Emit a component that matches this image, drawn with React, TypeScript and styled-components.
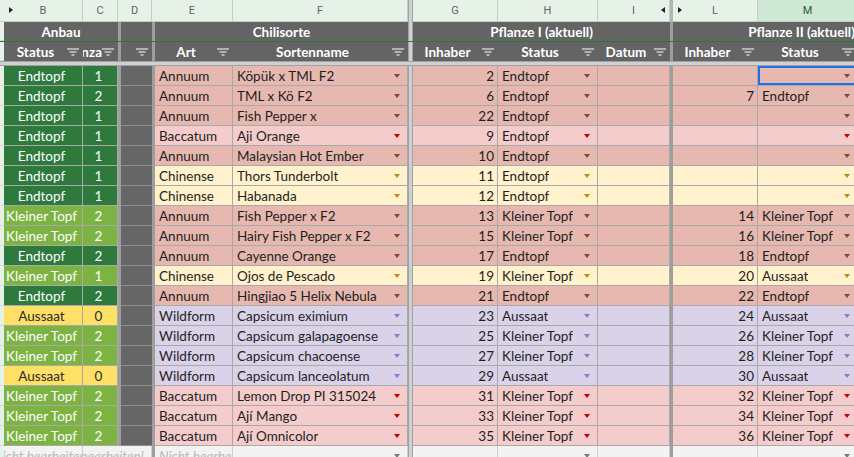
import styled, { createGlobalStyle } from 'styled-components';

// A | B | C | sep | D | sep | E | F | frozen | G | H | I | sep | L | M | N
const COLS =
	'4px 79px 35px 3px 31px 3px 78px 175px 5px 85px 100px 72px 3px 85px 100px 72px';

type Status = 'Endtopf' | 'Kleiner Topf' | 'Aussaat';
type Species = 'Annuum' | 'Baccatum' | 'Chinense' | 'Wildform';

interface Plant {
	status: Status;
	count: number;
	art: Species;
	name: string;
	owner1: number;
	status1: Status;
	owner2?: number;
	status2?: Status;
}

const speciesColors: Record<Species, { bg: string; arrow: string }> = {
	Annuum: { bg: '#e6b8af', arrow: '#8a4338' },
	Baccatum: { bg: '#f4cccc', arrow: '#cc0000' },
	Chinense: { bg: '#fff2cc', arrow: '#b8900c' },
	Wildform: { bg: '#d9d2e9', arrow: '#8e7cc3' },
};

const statusColors: Record<Status, { bg: string; color: string }> = {
	Endtopf: { bg: '#2e7a3d', color: '#ffffff' },
	'Kleiner Topf': { bg: '#7cb342', color: '#ffffff' },
	Aussaat: { bg: '#ffe066', color: '#2b2b2b' },
};

const plants: Plant[] = [
	{ status: 'Endtopf', count: 1, art: 'Annuum', name: 'Köpük x TML F2', owner1: 2, status1: 'Endtopf' },
	{ status: 'Endtopf', count: 2, art: 'Annuum', name: 'TML x Kö F2', owner1: 6, status1: 'Endtopf', owner2: 7, status2: 'Endtopf' },
	{ status: 'Endtopf', count: 1, art: 'Annuum', name: 'Fish Pepper x', owner1: 22, status1: 'Endtopf' },
	{ status: 'Endtopf', count: 1, art: 'Baccatum', name: 'Aji Orange', owner1: 9, status1: 'Endtopf' },
	{ status: 'Endtopf', count: 1, art: 'Annuum', name: 'Malaysian Hot Ember', owner1: 10, status1: 'Endtopf' },
	{ status: 'Endtopf', count: 1, art: 'Chinense', name: 'Thors Tunderbolt', owner1: 11, status1: 'Endtopf' },
	{ status: 'Endtopf', count: 1, art: 'Chinense', name: 'Habanada', owner1: 12, status1: 'Endtopf' },
	{ status: 'Kleiner Topf', count: 2, art: 'Annuum', name: 'Fish Pepper x F2', owner1: 13, status1: 'Kleiner Topf', owner2: 14, status2: 'Kleiner Topf' },
	{ status: 'Kleiner Topf', count: 2, art: 'Annuum', name: 'Hairy Fish Pepper x F2', owner1: 15, status1: 'Kleiner Topf', owner2: 16, status2: 'Kleiner Topf' },
	{ status: 'Endtopf', count: 2, art: 'Annuum', name: 'Cayenne Orange', owner1: 17, status1: 'Endtopf', owner2: 18, status2: 'Endtopf' },
	{ status: 'Kleiner Topf', count: 1, art: 'Chinense', name: 'Ojos de Pescado', owner1: 19, status1: 'Kleiner Topf', owner2: 20, status2: 'Aussaat' },
	{ status: 'Endtopf', count: 2, art: 'Annuum', name: 'Hingjiao 5 Helix Nebula', owner1: 21, status1: 'Endtopf', owner2: 22, status2: 'Endtopf' },
	{ status: 'Aussaat', count: 0, art: 'Wildform', name: 'Capsicum eximium', owner1: 23, status1: 'Aussaat', owner2: 24, status2: 'Aussaat' },
	{ status: 'Kleiner Topf', count: 2, art: 'Wildform', name: 'Capsicum galapagoense', owner1: 25, status1: 'Kleiner Topf', owner2: 26, status2: 'Kleiner Topf' },
	{ status: 'Kleiner Topf', count: 2, art: 'Wildform', name: 'Capsicum chacoense', owner1: 27, status1: 'Kleiner Topf', owner2: 28, status2: 'Kleiner Topf' },
	{ status: 'Aussaat', count: 0, art: 'Wildform', name: 'Capsicum lanceolatum', owner1: 29, status1: 'Aussaat', owner2: 30, status2: 'Aussaat' },
	{ status: 'Kleiner Topf', count: 2, art: 'Baccatum', name: 'Lemon Drop PI 315024', owner1: 31, status1: 'Kleiner Topf', owner2: 32, status2: 'Kleiner Topf' },
	{ status: 'Kleiner Topf', count: 2, art: 'Baccatum', name: 'Ají Mango', owner1: 33, status1: 'Kleiner Topf', owner2: 34, status2: 'Kleiner Topf' },
	{ status: 'Kleiner Topf', count: 2, art: 'Baccatum', name: 'Ají Omnicolor', owner1: 35, status1: 'Kleiner Topf', owner2: 36, status2: 'Kleiner Topf' },
];

const GlobalStyle = createGlobalStyle`
	html, body {
		margin: 0;
		padding: 0;
		background: #ffffff;
	}
	body {
		font-family: Lato, 'Liberation Sans', sans-serif;
	}
`;

const Sheet = styled.div`
	width: 854px;
	height: 457px;
	overflow: hidden;
	background: #ffffff;
`;

const Row = styled.div<{ $h: number }>`
	display: grid;
	grid-template-columns: ${COLS};
	grid-template-rows: 100%;
	height: ${(p) => p.$h}px;
	width: max-content;
`;

const Strip = styled.div<{ $top?: boolean }>`
	background: #e6f2e8;
	border-bottom: 1px solid ${(p) => (p.$top ? '#c5cec7' : '#cfd8d1')};
	box-sizing: border-box;
`;

const Letter = styled.div<{ $span?: number; $active?: boolean }>`
	position: relative;
	grid-column: span ${(p) => p.$span ?? 1};
	display: flex;
	align-items: center;
	justify-content: center;
	background: ${(p) => (p.$active ? '#cfe8d5' : '#e6f2e8')};
	color: ${(p) => (p.$active ? '#2e5c3a' : '#5f6368')};
	border-right: 1px solid #c5cec7;
	border-bottom: 1px solid #c5cec7;
	box-sizing: border-box;
	font-family: Roboto, 'Liberation Sans', sans-serif;
	font-size: 11px;
`;

const HiddenMark = styled.span<{ $side: 'left' | 'right' }>`
	position: absolute;
	top: 7px;
	${(p) => (p.$side === 'left' ? 'left: 5px;' : 'right: 4px;')}
	width: 0;
	height: 0;
	border-top: 3.5px solid transparent;
	border-bottom: 3.5px solid transparent;
	${(p) =>
		p.$side === 'left'
			? 'border-left: 4px solid #202124;'
			: 'border-right: 4px solid #202124;'}
`;

const Dark = styled.div<{ $span?: number }>`
	grid-column: span ${(p) => p.$span ?? 1};
	display: flex;
	align-items: center;
	justify-content: center;
	background: #646464;
	color: #ffffff;
	font-weight: 700;
	font-size: 13.5px;
	white-space: nowrap;
	overflow: hidden;
`;

const HeadCell = styled.div`
	display: flex;
	align-items: center;
	background: #646464;
	color: #ffffff;
	font-weight: 700;
	font-size: 13.5px;
	overflow: hidden;
	padding-right: 4px;
`;

const HeadLabel = styled.span`
	flex: 1;
	min-width: 0;
	display: flex;
	justify-content: center;
	overflow: hidden;
	white-space: nowrap;
`;

const Sep = styled.div<{ $tone?: 'dark' | 'light' }>`
	background: ${(p) => (p.$tone === 'light' ? '#b4b4b4' : '#9e9e9e')};
`;

const Frozen = styled.div`
	background: #cfd0d4;
	border-left: 1px solid #a2a2a2;
	border-right: 1px solid #a2a2a2;
`;

const FilterLine = styled.div`
	height: 1px;
	background: #1e7e3a;
`;

const HDivider = styled.div`
	height: 5px;
	box-sizing: border-box;
	background: #cfd0d4;
	border-top: 1px solid #a2a2a2;
	border-bottom: 1px solid #a2a2a2;
`;

const Cell = styled.div<{
	$bg: string;
	$color?: string;
	$align?: 'left' | 'center' | 'right';
	$selected?: boolean;
	$span?: number;
}>`
	grid-column: span ${(p) => p.$span ?? 1};
	display: flex;
	align-items: center;
	justify-content: ${(p) =>
		p.$align === 'center' ? 'center' : p.$align === 'right' ? 'flex-end' : 'flex-start'};
	background: ${(p) => p.$bg};
	color: ${(p) => p.$color ?? '#1f1f1f'};
	border-right: 1px solid #a9a9a9;
	border-bottom: 1px solid #a9a9a9;
	box-sizing: border-box;
	padding: ${(p) => (p.$align === 'right' ? '0 3px 0 2px' : '0 7px 0 4px')};
	font-size: 13.5px;
	white-space: nowrap;
	overflow: hidden;
	${(p) => p.$selected && 'box-shadow: inset 0 0 0 2px #1a73e8;'}
`;

const DarkCell = styled.div`
	background: #666666;
	border-bottom: 1px solid #8e8e8e;
	box-sizing: border-box;
`;

const Ghost = styled.div<{ $align?: 'left' | 'center' | 'right'; $span?: number }>`
	grid-column: span ${(p) => p.$span ?? 1};
	display: flex;
	align-items: center;
	justify-content: ${(p) =>
		p.$align === 'center' ? 'center' : p.$align === 'right' ? 'flex-end' : 'flex-start'};
	background: #f3f3f3;
	color: #b9b9b9;
	font-style: italic;
	font-size: 13.5px;
	border-right: 1px solid #cfcfcf;
	box-sizing: border-box;
	padding: 0 7px 0 4px;
	white-space: nowrap;
	overflow: hidden;
`;

const Text = styled.span`
	overflow: hidden;
`;

const DropArrow = styled.span<{ $color: string }>`
	flex: none;
	margin-left: auto;
	width: 0;
	height: 0;
	border-left: 3.5px solid transparent;
	border-right: 3.5px solid transparent;
	border-top: 4px solid ${(p) => p.$color};
`;

function FilterIcon() {
	return (
		<svg width="12" height="8" viewBox="0 0 12 8" style={{ flex: 'none' }}>
			<path d="M0 1h12M2.5 4h7M4.5 7h3" stroke="#ffffff" strokeWidth="1.2" />
		</svg>
	);
}

function Head({ label }: { label?: string }) {
	return (
		<HeadCell>
			<HeadLabel>{label}</HeadLabel>
			<FilterIcon />
		</HeadCell>
	);
}

function PlantRow({ plant, first }: { plant: Plant; first: boolean }) {
	const sp = speciesColors[plant.art];
	const st = statusColors[plant.status];
	return (
		<Row $h={20}>
			<Strip />
			<Cell $bg={st.bg} $color={st.color} $align="center">
				{plant.status}
			</Cell>
			<Cell $bg={st.bg} $color={st.color} $align="center">
				{plant.count}
			</Cell>
			<Sep />
			<DarkCell />
			<Sep />
			<Cell $bg={sp.bg}>{plant.art}</Cell>
			<Cell $bg={sp.bg}>
				<Text>{plant.name}</Text>
				<DropArrow $color={sp.arrow} />
			</Cell>
			<Frozen />
			<Cell $bg={sp.bg} $align="right">
				{plant.owner1}
			</Cell>
			<Cell $bg={sp.bg}>
				<Text>{plant.status1}</Text>
				<DropArrow $color={sp.arrow} />
			</Cell>
			<Cell $bg={sp.bg} />
			<Sep />
			<Cell $bg={sp.bg} $align="right">
				{plant.owner2}
			</Cell>
			<Cell $bg={sp.bg} $selected={first}>
				<Text>{plant.status2}</Text>
				<DropArrow $color={sp.arrow} />
			</Cell>
			<Cell $bg={sp.bg} />
		</Row>
	);
}

export default function App() {
	return (
		<Sheet>
			<GlobalStyle />
			<Row $h={22}>
				<Strip $top />
				<Letter>
					<HiddenMark $side="left" />B
				</Letter>
				<Letter>C</Letter>
				<Letter $span={2}>D</Letter>
				<Letter $span={2}>E</Letter>
				<Letter>F</Letter>
				<Frozen />
				<Letter>G</Letter>
				<Letter>H</Letter>
				<Letter>
					I<HiddenMark $side="right" />
				</Letter>
				<Sep $tone="light" />
				<Letter>
					<HiddenMark $side="left" />L
				</Letter>
				<Letter $active>M</Letter>
				<Letter>N</Letter>
			</Row>
			<Row $h={19}>
				<Strip />
				<Dark $span={2}>Anbau</Dark>
				<Sep />
				<Dark />
				<Sep />
				<Dark $span={2}>Chilisorte</Dark>
				<Frozen />
				<Dark $span={3}>Pflanze I (aktuell)</Dark>
				<Sep />
				<Dark $span={3}>Pflanze II (aktuell)</Dark>
			</Row>
			<FilterLine />
			<Row $h={19}>
				<Strip />
				<Head label="Status" />
				<Head label="Anzahl" />
				<Sep />
				<Head />
				<Sep />
				<Head label="Art" />
				<Head label="Sortenname" />
				<Frozen />
				<Head label="Inhaber" />
				<Head label="Status" />
				<Head label="Datum" />
				<Sep />
				<Head label="Inhaber" />
				<Head label="Status" />
				<Head label="Datum" />
			</Row>
			<HDivider />
			{plants.map((p, i) => (
				<PlantRow key={p.name} plant={p} first={i === 0} />
			))}
			<Row $h={20}>
				<Strip />
				<Ghost $align="center">Nicht bearbeiten!</Ghost>
				<Ghost $align="right" $span={3}>
					Nicht bearbeiten!
				</Ghost>
				<Sep />
				<Ghost>Nicht bearbeiten!</Ghost>
				<Ghost>
					<DropArrow $color="#7a7a7a" />
				</Ghost>
				<Frozen />
				<Ghost />
				<Ghost>
					<DropArrow $color="#7a7a7a" />
				</Ghost>
				<Ghost />
				<Sep />
				<Ghost />
				<Ghost>
					<DropArrow $color="#7a7a7a" />
				</Ghost>
				<Ghost />
			</Row>
		</Sheet>
	);
}
